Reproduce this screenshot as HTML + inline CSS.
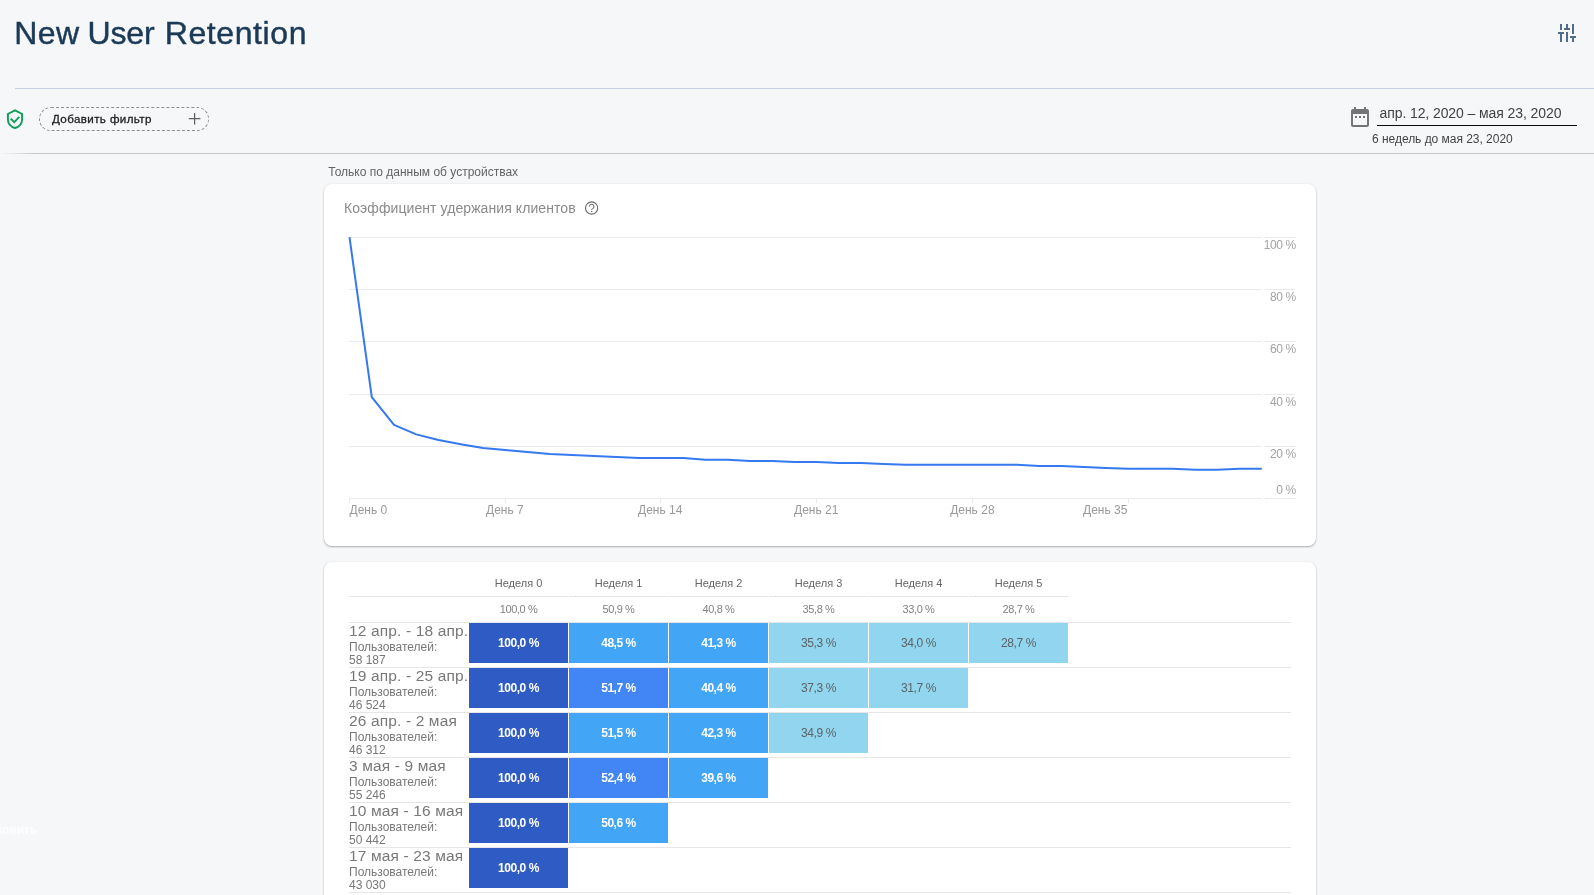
<!DOCTYPE html>
<html lang="ru">
<head>
<meta charset="utf-8">
<title>New User Retention</title>
<style>
*{box-sizing:border-box;margin:0;padding:0}
html,body{width:1594px;height:895px;overflow:hidden}
body{background:#f6f7f9;font-family:"Liberation Sans",sans-serif;position:relative;color:#444}
#root{position:absolute;left:0;top:0;width:1594px;height:895px;overflow:hidden;will-change:transform}
.abs{position:absolute;white-space:nowrap;line-height:1}
#title{left:0;top:17px;font-size:32px;color:#1b3a57;-webkit-text-stroke:0.45px #1b3a57}
#title span{position:absolute;top:0}
#tw1{left:14.3px;letter-spacing:0.4px}
#tw2{left:87.4px;letter-spacing:-0.1px}
#tw3{left:164.7px;letter-spacing:0.6px}
#hr1{left:15px;top:88px;width:1579px;height:1px;background:#c5d0e0}
#hr2{left:0;top:153px;width:1594px;height:1px;background:linear-gradient(to right,rgba(196,198,200,0) 0,#c4c6c8 36px,#c4c6c8 100%)}
#chip{left:39px;top:107px;width:170px;height:24px;border:1px dashed #8f8f8f;border-radius:12px}
#chiptxt{left:52px;top:113px;font-size:11.6px;color:#222;letter-spacing:0.38px;-webkit-text-stroke:0.3px #222}
#datetxt{left:1379.5px;top:106px;font-size:14px;color:#424242;letter-spacing:-0.09px}
#dateline{left:1377px;top:125px;width:200px;height:1px;background:#0a0a0a}
#datesub{left:1372px;top:133px;font-size:12px;color:#444;letter-spacing:-0.03px}
#note{left:328.3px;top:166px;font-size:12px;color:#636363}
.card{position:absolute;background:#fff;border-radius:8px;box-shadow:0 1px 2px rgba(0,0,0,.30),0 0 2px rgba(0,0,0,.07)}
#card1{left:324px;top:184px;width:992px;height:362px}
#card2{left:324px;top:562px;width:992px;height:340px}
#ctitle{left:344px;top:201px;font-size:14px;color:#8a8a8a;letter-spacing:0.08px}
.yl{font-size:12px;color:#a3a3a3;right:298.3px;letter-spacing:-0.4px}
.xl{font-size:12px;color:#9a9a9a;top:504px}
.hd{font-size:11px;color:#666;top:578px;width:99px;text-align:center}
.av{font-size:11px;color:#828282;top:604px;width:99px;text-align:center;letter-spacing:-0.4px}
.hl{position:absolute;top:596px;height:1px;width:99px;background:#e3e3e3}
.rl{position:absolute;left:349px;width:942px;height:1px;background:#e6e6e6}
.c{position:absolute;width:99px;height:40px;line-height:40px;text-align:center;font-size:12px;font-weight:bold;color:#fff;white-space:nowrap;letter-spacing:-0.45px}
.c0{background:#2f5bc4}
.c1{background:#42a5f5}
.c2{background:#4285f4}
.c3{background:#91d5ee;color:#5b6468;font-weight:normal;letter-spacing:-0.4px}
.r1{font-size:15.5px;color:#787878;left:349px;letter-spacing:0.14px;margin-top:-2px}
.r2{font-size:12px;color:#777;left:349px}
</style>
</head>
<body>
<div id="root">
<div class="abs" id="title"><span id="tw1">New</span><span id="tw2">User</span><span id="tw3">Retention</span></div>

<svg class="abs" id="tune" style="left:1555px;top:21px" width="24" height="24" viewBox="0 0 24 24" fill="#526a8b">
<rect x="5" y="3" width="2" height="6"/><rect x="3" y="11" width="6" height="2"/><rect x="5" y="13" width="2" height="8"/>
<rect x="11" y="3" width="2" height="4"/><rect x="9" y="7" width="6" height="2"/><rect x="11" y="11" width="2" height="10"/>
<rect x="17" y="3" width="2" height="10"/><rect x="15" y="15" width="6" height="2"/><rect x="17" y="17" width="2" height="4"/>
</svg>

<div class="abs" id="hr1"></div>
<div class="abs" id="hr2"></div>

<svg class="abs" id="shield" style="left:0;top:103px" width="40" height="32" viewBox="0 0 40 32" fill="none" stroke="#0f9d58" stroke-width="1.950">
<path d="M15 7.300L22.100 11V16.200C22.100 20.400 19.100 23.900 15 24.950C10.900 23.900 7.900 20.400 7.900 16.200V11Z" stroke-linejoin="miter"/>
<path d="M10.700 15.700L14.300 19.100L19.300 13.900" stroke-width="1.900"/>
</svg>
<div class="abs" id="chip"></div>
<div class="abs" id="chiptxt">Добавить фильтр</div>
<svg class="abs" id="plus" style="left:188px;top:112px" width="14" height="14" viewBox="0 0 14 14"><path d="M6.600 0.900v11.600M0.800 6.700h11.600" stroke="#5f5f5f" stroke-width="1.250" fill="none"/></svg>

<svg class="abs" id="cal" style="left:1348px;top:104.700px" width="24" height="24" viewBox="0 0 24 24" fill="#757575">
<path d="M9 11H7v2h2v-2zm4 0h-2v2h2v-2zm4 0h-2v2h2v-2zm2-7h-1V2h-2v2H8V2H6v2H5c-1.110 0-1.990.9-1.990 2L3 20c0 1.100.89 2 2 2h14c1.100 0 2-.9 2-2V6c0-1.100-.9-2-2-2zm0 16H5V9h14v11z"/>
</svg>
<div class="abs" id="datetxt">апр. 12, 2020 – мая 23, 2020</div>
<div class="abs" id="dateline"></div>
<div class="abs" id="datesub">6 недель до мая 23, 2020</div>

<div class="abs" id="note">Только по данным об устройствах</div>

<div class="card" id="card1"></div>
<div class="card" id="card2"></div>

<div class="abs" id="ctitle">Коэффициент удержания клиентов</div>
<svg class="abs" id="help" style="left:583px;top:199px" width="17" height="17" viewBox="-8.600 -9 17 17" fill="none" stroke="#6e6e6e" stroke-width="1.150">
<circle cx="0" cy="0" r="6.100"/>
<path d="M-2.300 -1.400A2.300 2.300 0 1 1 1.500 0.350Q0 1.100 0 1.900" stroke-width="1.050"/>
<circle cx="0" cy="3.600" r="0.750" fill="#6e6e6e" stroke="none"/>
</svg>

<svg class="abs" id="chart" style="left:0;top:0" width="1594" height="895" viewBox="0 0 1594 895">
<g stroke="#e9e9e9" stroke-width="1" shape-rendering="crispEdges">
<path d="M349 237.500H1261M1265 237.500H1295M349 289.500H1261M1265 289.500H1295M349 341.500H1261M1265 341.500H1295M349 394.500H1261M1265 394.500H1295M349 446.500H1261M1265 446.500H1295M349 498.500H1261M1265 498.500H1295"/>
<path d="M349.500 498V503M505.500 498V503M660.500 498V503M816.500 498V503M972.500 498V503M1128.500 498V503"/>
</g>
<polyline fill="none" stroke="#3579f0" stroke-width="2" stroke-linejoin="round" points="349.5,237.2 371.8,397.1 394.0,424.9 416.2,434.4 438.5,440 460.8,444.2 483.0,448 505.2,450 527.5,452 549.8,453.9 572.0,455 594.2,456 616.5,457 638.8,458 661.0,458 683.2,458 705.5,459.7 727.8,459.7 750.0,460.9 772.2,460.9 794.5,462 816.8,462 839.0,463 861.2,463 883.5,463.9 905.8,464.7 928.0,464.7 950.2,464.7 972.5,464.7 994.8,464.7 1017.0,464.7 1039.2,466 1061.5,466 1083.8,466.9 1106.0,467.9 1128.2,468.8 1150.5,468.8 1172.8,468.8 1195.0,469.7 1217.2,469.7 1239.5,468.8 1261.8,468.8"/>
</svg>

<div class="abs yl" style="top:239px">100 %</div>
<div class="abs yl" style="top:291px">80 %</div>
<div class="abs yl" style="top:343px">60 %</div>
<div class="abs yl" style="top:396px">40 %</div>
<div class="abs yl" style="top:448px">20 %</div>
<div class="abs yl" style="top:484px">0 %</div>

<div class="abs xl" style="left:349.500px">День 0</div>
<div class="abs xl" style="left:486px">День 7</div>
<div class="abs xl" style="left:638px">День 14</div>
<div class="abs xl" style="left:794px">День 21</div>
<div class="abs xl" style="left:950.200px">День 28</div>
<div class="abs xl" style="left:1083px">День 35</div>

<!-- TABLE -->
<div id="table">
<div class="abs hd" style="left:469px">Неделя 0</div>
<div class="hl" style="left:469px"></div>
<div class="abs av" style="left:469px">100,0 %</div>
<div class="abs hd" style="left:569px">Неделя 1</div>
<div class="hl" style="left:569px"></div>
<div class="abs av" style="left:569px">50,9 %</div>
<div class="abs hd" style="left:669px">Неделя 2</div>
<div class="hl" style="left:669px"></div>
<div class="abs av" style="left:669px">40,8 %</div>
<div class="abs hd" style="left:769px">Неделя 3</div>
<div class="hl" style="left:769px"></div>
<div class="abs av" style="left:769px">35,8 %</div>
<div class="abs hd" style="left:869px">Неделя 4</div>
<div class="hl" style="left:869px"></div>
<div class="abs av" style="left:869px">33,0 %</div>
<div class="abs hd" style="left:969px">Неделя 5</div>
<div class="hl" style="left:969px"></div>
<div class="abs av" style="left:969px">28,7 %</div>
<div class="hl" style="left:349px;width:120px"></div>
<div class="rl" style="top:622px"></div>
<div class="abs r1" style="top:625px">12 апр. - 18 апр.</div>
<div class="abs r2" style="top:641px">Пользователей:</div>
<div class="abs r2" style="top:654px">58 187</div>
<div class="c c0" style="left:469px;top:623px">100,0 %</div>
<div class="c c1" style="left:569px;top:623px">48,5 %</div>
<div class="c c1" style="left:669px;top:623px">41,3 %</div>
<div class="c c3" style="left:769px;top:623px">35,3 %</div>
<div class="c c3" style="left:869px;top:623px">34,0 %</div>
<div class="c c3" style="left:969px;top:623px">28,7 %</div>
<div class="rl" style="top:667px"></div>
<div class="abs r1" style="top:670px">19 апр. - 25 апр.</div>
<div class="abs r2" style="top:686px">Пользователей:</div>
<div class="abs r2" style="top:699px">46 524</div>
<div class="c c0" style="left:469px;top:668px">100,0 %</div>
<div class="c c2" style="left:569px;top:668px">51,7 %</div>
<div class="c c1" style="left:669px;top:668px">40,4 %</div>
<div class="c c3" style="left:769px;top:668px">37,3 %</div>
<div class="c c3" style="left:869px;top:668px">31,7 %</div>
<div class="rl" style="top:712px"></div>
<div class="abs r1" style="top:715px">26 апр. - 2 мая</div>
<div class="abs r2" style="top:731px">Пользователей:</div>
<div class="abs r2" style="top:744px">46 312</div>
<div class="c c0" style="left:469px;top:713px">100,0 %</div>
<div class="c c1" style="left:569px;top:713px">51,5 %</div>
<div class="c c1" style="left:669px;top:713px">42,3 %</div>
<div class="c c3" style="left:769px;top:713px">34,9 %</div>
<div class="rl" style="top:757px"></div>
<div class="abs r1" style="top:760px">3 мая - 9 мая</div>
<div class="abs r2" style="top:776px">Пользователей:</div>
<div class="abs r2" style="top:789px">55 246</div>
<div class="c c0" style="left:469px;top:758px">100,0 %</div>
<div class="c c2" style="left:569px;top:758px">52,4 %</div>
<div class="c c1" style="left:669px;top:758px">39,6 %</div>
<div class="rl" style="top:802px"></div>
<div class="abs r1" style="top:805px">10 мая - 16 мая</div>
<div class="abs r2" style="top:821px">Пользователей:</div>
<div class="abs r2" style="top:834px">50 442</div>
<div class="c c0" style="left:469px;top:803px">100,0 %</div>
<div class="c c1" style="left:569px;top:803px">50,6 %</div>
<div class="rl" style="top:847px"></div>
<div class="abs r1" style="top:850px">17 мая - 23 мая</div>
<div class="abs r2" style="top:866px">Пользователей:</div>
<div class="abs r2" style="top:879px">43 030</div>
<div class="c c0" style="left:469px;top:848px">100,0 %</div>
<div class="rl" style="top:892px"></div>
</div><!--/table-->

<div class="abs" id="ghost" style="left:-22px;top:824px;font-size:12px;font-weight:bold;color:#fdfeff">Обновить</div>
</div>
</body>
</html>
